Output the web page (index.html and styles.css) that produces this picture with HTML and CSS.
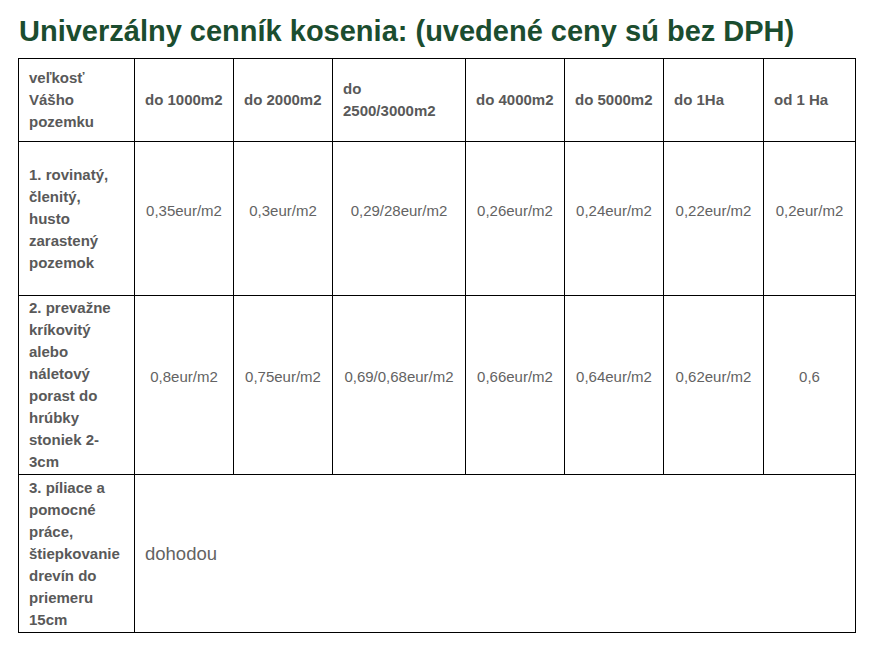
FILE: index.html
```html
<!DOCTYPE html>
<html lang="sk">
<head>
<meta charset="utf-8">
<title>Cenník kosenia</title>
<link rel="stylesheet" href="styles.css">
</head>
<body>
<main class="page">
  <h1 class="title">Univerzálny cenník kosenia: (uvedené ceny sú bez DPH)</h1>
  <table class="price-table">
    <colgroup>
      <col class="c1"><col class="c2"><col class="c3"><col class="c4"><col class="c5"><col class="c6"><col class="c7"><col class="c8">
    </colgroup>
    <tr class="row-head">
      <th>veľkosť Vášho pozemku</th>
      <th>do 1000m2</th>
      <th>do 2000m2</th>
      <th>do 2500/3000m2</th>
      <th>do 4000m2</th>
      <th>do 5000m2</th>
      <th>do 1Ha</th>
      <th>od 1 Ha</th>
    </tr>
    <tr class="row-1">
      <th>1. rovinatý, členitý, husto zarastený pozemok</th>
      <td>0,35eur/m2</td>
      <td>0,3eur/m2</td>
      <td>0,29/28eur/m2</td>
      <td>0,26eur/m2</td>
      <td>0,24eur/m2</td>
      <td>0,22eur/m2</td>
      <td>0,2eur/m2</td>
    </tr>
    <tr class="row-2">
      <th>2. prevažne kríkovitý alebo náletový porast do hrúbky stoniek 2-3cm</th>
      <td>0,8eur/m2</td>
      <td>0,75eur/m2</td>
      <td>0,69/0,68eur/m2</td>
      <td>0,66eur/m2</td>
      <td>0,64eur/m2</td>
      <td>0,62eur/m2</td>
      <td>0,6</td>
    </tr>
    <tr class="row-3">
      <th>3. píliace a pomocné práce, štiepkovanie drevín do priemeru 15cm</th>
      <td class="deal" colspan="7">dohodou</td>
    </tr>
  </table>
</main>
</body>
</html>
```

FILE: styles.css
```css
html, body {
  margin: 0;
  padding: 0;
  background: #ffffff;
}

.page {
  padding: 15px 18px 0 18px;
  font-family: "Liberation Sans", Arial, sans-serif;
}

.title {
  margin: 0 0 11px 1px;
  font-size: 29px;
  line-height: 32px;
  font-weight: bold;
  color: #1b4d2f;
}

.price-table {
  border-collapse: collapse;
  table-layout: fixed;
  width: 837px;
  color: #595959;
  font-size: 15px;
  line-height: 22px;
}

.price-table th,
.price-table td {
  border: 1px solid #000000;
  padding: 1px 10px;
  vertical-align: middle;
}

.price-table th {
  text-align: left;
  font-weight: bold;
}

.price-table td {
  text-align: center;
  font-weight: normal;
  color: #636363;
  padding-bottom: 17px;
}

.price-table td.deal {
  text-align: left;
  font-size: 18.5px;
  padding: 1px 10px;
}

.c1 { width: 116px; }
.c2 { width: 99px; }
.c3 { width: 99px; }
.c4 { width: 133px; }
.c5 { width: 99px; }
.c6 { width: 99px; }
.c7 { width: 100px; }
.c8 { width: 92px; }

.row-head { height: 83px; }
.row-1 { height: 154px; }
.row-2 { height: 179px; }
.row-3 { height: 158px; }
```
